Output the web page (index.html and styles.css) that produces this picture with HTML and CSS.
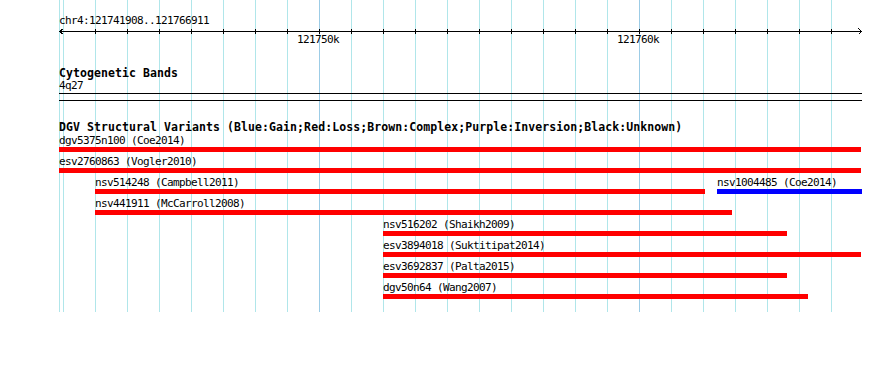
FILE: index.html
```html
<!DOCTYPE html>
<html lang="en">
<head>
    <meta charset="UTF-8">
    <title>DGV Structural Variants - chr4:121741908..121766911</title>
    <link rel="stylesheet" href="styles.css">
</head>
<body>
    <div class="panel">
        <div class="grid-lines">
            <i class="edge"></i>
            <i></i><i></i><i></i><i></i><i></i><i></i><i></i><i></i>
            <i class="major"></i>
            <i></i><i></i><i></i><i></i><i></i><i></i><i></i><i></i><i></i>
            <i class="major"></i>
            <i></i><i></i><i></i><i></i><i></i><i></i>
        </div>

        <div class="content">
            <div class="ruler">
                <div class="ruler-title">chr4:121741908..121766911</div>
                <svg class="axis" width="804" height="9" viewBox="0 0 804 9">
                    <path d="M0.5 4.5H802.5M4.5 1.5L0.5 4.5L4.5 7.5M799.5 1.5L802.5 4.5L799.5 7.5"/>
                    <path d="M36.5 2v5m32-5v5m32-5v5m32-5v5m32-5v5m32-5v5m32-5v5m32-5v5m32-5v5m32-5v5m32-5v5m32-5v5m32-5v5m32-5v5m32-5v5m32-5v5m32-5v5m32-5v5m32-5v5m32-5v5m32-5v5m32-5v5m32-5v5m32-5v5"/>
                </svg>
                <div class="ruler-labels">
                    <span style="margin-left:238px">121750k</span>
                    <span style="margin-left:278px">121760k</span>
                </div>
            </div>

            <div class="track track-cyto">
                <div class="track-title">Cytogenetic Bands</div>
                <div class="band-name">4q27</div>
                <div class="band"></div>
            </div>

            <div class="track track-dgv">
                <div class="track-title">DGV Structural Variants (Blue:Gain;Red:Loss;Brown:Complex;Purple:Inversion;Black:Unknown)</div>
                <div class="rows">
                    <div class="row">
                        <div class="feat loss" style="margin-left:0px;width:802px">
                            <div class="label">dgv5375n100 (Coe2014)</div>
                            <div class="bar"></div>
                        </div>
                    </div>
                    <div class="row">
                        <div class="feat loss" style="margin-left:0px;width:802px">
                            <div class="label">esv2760863 (Vogler2010)</div>
                            <div class="bar"></div>
                        </div>
                    </div>
                    <div class="row">
                        <div class="feat loss" style="margin-left:36px;width:610px">
                            <div class="label">nsv514248 (Campbell2011)</div>
                            <div class="bar"></div>
                        </div>
                        <div class="feat gain" style="margin-left:658px;width:145px">
                            <div class="label">nsv1004485 (Coe2014)</div>
                            <div class="bar"></div>
                        </div>
                    </div>
                    <div class="row">
                        <div class="feat loss" style="margin-left:36px;width:637px">
                            <div class="label">nsv441911 (McCarroll2008)</div>
                            <div class="bar"></div>
                        </div>
                    </div>
                    <div class="row">
                        <div class="feat loss" style="margin-left:324px;width:404px">
                            <div class="label">nsv516202 (Shaikh2009)</div>
                            <div class="bar"></div>
                        </div>
                    </div>
                    <div class="row">
                        <div class="feat loss" style="margin-left:324px;width:478px">
                            <div class="label">esv3894018 (Suktitipat2014)</div>
                            <div class="bar"></div>
                        </div>
                    </div>
                    <div class="row">
                        <div class="feat loss" style="margin-left:324px;width:404px">
                            <div class="label">esv3692837 (Palta2015)</div>
                            <div class="bar"></div>
                        </div>
                    </div>
                    <div class="row">
                        <div class="feat loss" style="margin-left:324px;width:425px">
                            <div class="label">dgv50n64 (Wang2007)</div>
                            <div class="bar"></div>
                        </div>
                    </div>
                </div>
            </div>
        </div>
    </div>
</body>
</html>
```

FILE: styles.css
```css
body {
    margin: 0;
    background: #fff;
    color: #000;
    font-family: "DejaVu Sans Mono", "Liberation Mono", monospace;
    font-size: 11px;
    letter-spacing: -0.62px;
}
.panel {
    display: grid;
    width: 890px;
    height: 312px;
}

/* vertical grid, drawn under the tracks */
.grid-lines {
    grid-area: 1 / 1;
    display: flex;
    padding-left: 59px;
}
.grid-lines i {
    width: 1px;
    margin-left: 31px;
    background: #b0e6ea;
}
.grid-lines i.edge {
    margin-left: 0;
}
.grid-lines i.edge + i {
    margin-left: 3px;
}
.grid-lines i.major {
    background: #9ccce6;
}

.content {
    grid-area: 1 / 1;
    padding-left: 59px;
}

/* ruler */
.ruler {
    padding-top: 15px;
}
.ruler-title {
    line-height: 12px;
    white-space: nowrap;
}
.axis {
    display: block;
}
.axis path {
    fill: none;
    stroke: #000;
    stroke-width: 1;
    shape-rendering: crispEdges;
}
.ruler-labels {
    display: flex;
    height: 8px;
    line-height: 8px;
    white-space: nowrap;
}

/* tracks */
.track-title {
    font-size: 11.5px;
    font-weight: bold;
    letter-spacing: 0.08px;
    line-height: 14px;
    white-space: nowrap;
}
.track-cyto {
    margin-top: 22px;
}
.band-name {
    line-height: 12px;
}
.band {
    width: 803px;
    height: 6px;
    margin-top: 1px;
    border-top: 1px solid #000;
    border-bottom: 1px solid #000;
}
.track-dgv {
    margin-top: 19px;
}
.row {
    display: grid;
    margin-bottom: 3px;
}
.feat {
    grid-area: 1 / 1;
}
.label {
    line-height: 13px;
    white-space: nowrap;
}
.bar {
    height: 5px;
}
.loss .bar {
    background: #ff0000;
}
.gain .bar {
    background: #0000ff;
}
```
